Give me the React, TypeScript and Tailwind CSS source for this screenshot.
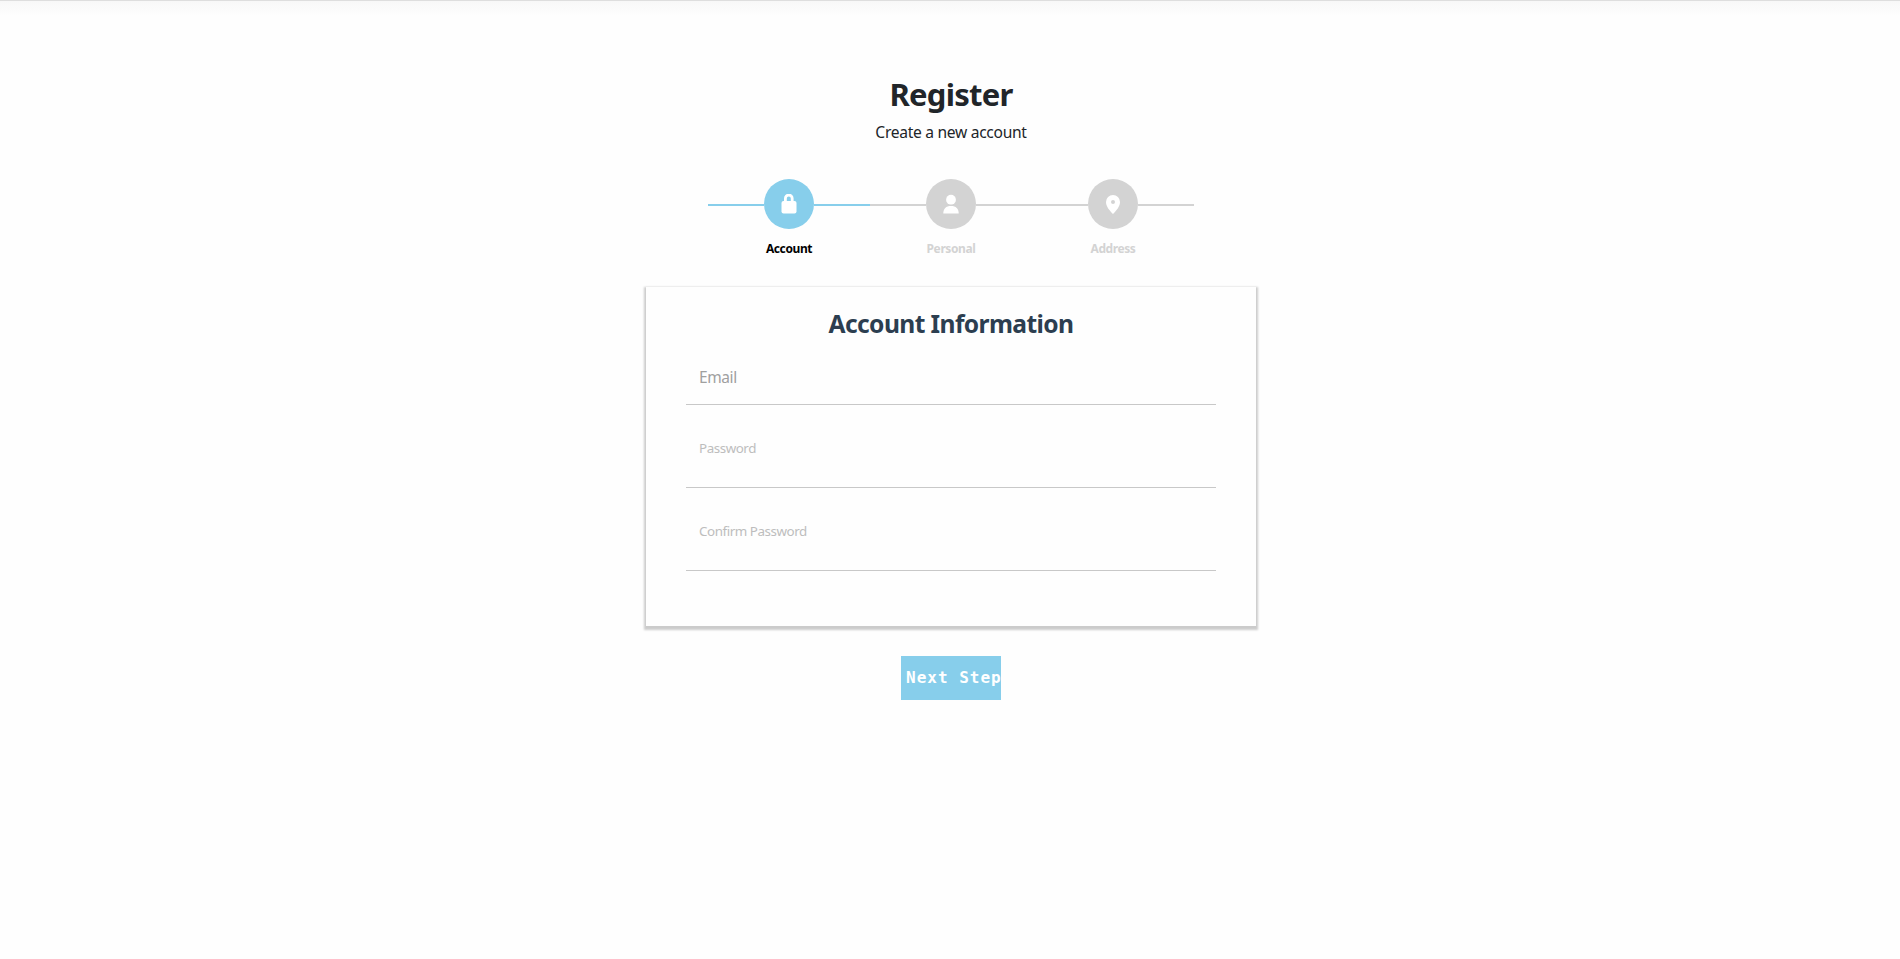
import React from "react";

const steps = [
  { title: "Account", active: true, icon: <LockIcon /> },
  { title: "Personal", active: false, icon: <PersonIcon /> },
  { title: "Address", active: false, icon: <PinIcon /> },
];

const fields = [
  { name: "email", type: "email", placeholder: "Email", className: "h-[59px] pt-[3px] text-[15.5px] tracking-[-0.4px] placeholder:text-[#a0a0a0]" },
  { name: "password", type: "password", placeholder: "Password", className: "h-[83px] pt-[4px] text-[13.4px] tracking-[-0.45px] placeholder:text-[#bdbdbd]" },
  { name: "confirm", type: "password", placeholder: "Confirm Password", className: "h-[83px] pt-[4px] text-[13.4px] tracking-[-0.45px] placeholder:text-[#bdbdbd]" },
];

function LockIcon() {
  return (
    <svg width="16" height="20" viewBox="0 0 16 20">
      <path d="M4.4 8V4.4a3.4 3.4 0 0 1 6.8 0V8" fill="none" stroke="white" strokeWidth="2.8" />
      <rect x="0.5" y="7" width="15" height="12.6" rx="2" fill="white" />
    </svg>
  );
}

function PersonIcon() {
  return (
    <svg width="16" height="20" viewBox="0 0 16 20">
      <circle cx="8" cy="5.7" r="4.9" fill="white" />
      <path d="M0.3 19.5C0.3 14.5 3 12 8 12s7.7 2.5 7.7 7.5z" fill="white" />
    </svg>
  );
}

function PinIcon() {
  return (
    <svg width="16" height="20" viewBox="0 0 16 20">
      <path fillRule="evenodd" d="M8 1a7 7 0 0 1 7 7c0 4.5-3.5 8.5-7 12C4.5 16.5 1 12.5 1 8a7 7 0 0 1 7-7zm0 5a2 2 0 1 0 0 4a2 2 0 0 0 0-4z" fill="white" />
    </svg>
  );
}

export default function App() {
  return (
    <div className="h-[959px] overflow-hidden bg-[#fefefe] font-['Noto_Sans','Open_Sans',sans-serif]">
      <div className="h-4 border-t border-[#dedede] bg-linear-to-b from-[#f8f8f8] to-[#fefefe]" />
      <div className="flex justify-center pl-[2px]">
        <main className="flex w-[610px] flex-col items-center pt-[56px]">
          <h1 className="text-[31px] font-bold leading-[44px] tracking-[-0.75px] text-[#212529]">Register</h1>
          <p className="mt-[4px] text-[15.6px] leading-6 tracking-[-0.3px] text-[#212529]">Create a new account</p>

          <ul className="mt-[35px] flex w-[486px]">
            {steps.map((step) => (
              <li key={step.title} className="flex w-[162px] flex-col items-center">
                <div className="flex w-full items-center">
                  <span className={`mt-[2px] h-[2px] flex-1 ${step.active ? "bg-[#87ceeb]" : "bg-[#d3d3d3]"}`} />
                  <span className={`flex size-[50px] items-center justify-center rounded-full ${step.active ? "bg-[#87ceeb]" : "bg-[#d3d3d3]"}`}>
                    {step.icon}
                  </span>
                  <span className={`mt-[2px] h-[2px] flex-1 ${step.active ? "bg-[#87ceeb]" : "bg-[#d3d3d3]"}`} />
                </div>
                <span className={`mt-[10px] text-[12px] font-bold leading-5 tracking-[-0.4px] ${step.active ? "text-black" : "text-[#d3d3d3]"}`}>
                  {step.title}
                </span>
              </li>
            ))}
          </ul>

          <form className="mt-7 flex h-[339px] w-[610px] flex-col bg-[#fefefe] px-10 pt-[22px] shadow-[0_2px_2px_2px_rgba(0,0,0,0.2)]">
            <h2 className="mb-[7px] text-center text-[24.6px] font-bold leading-[30px] tracking-[-0.6px] text-[#2c3e50]">
              Account Information
            </h2>
            {fields.map((field) => (
              <input
                key={field.name}
                type={field.type}
                placeholder={field.placeholder}
                className={`w-full shrink-0 border-b border-[#c8c8c8] px-[13px] outline-none ${field.className}`}
              />
            ))}
          </form>

          <button className="mt-[30px] h-11 w-[100px] overflow-hidden whitespace-nowrap bg-[#87ceeb] pl-[5px] text-left font-['DejaVu_Sans_Mono',monospace] text-base font-bold tracking-[1px] text-white">
            Next Step
          </button>
        </main>
      </div>
    </div>
  );
}
